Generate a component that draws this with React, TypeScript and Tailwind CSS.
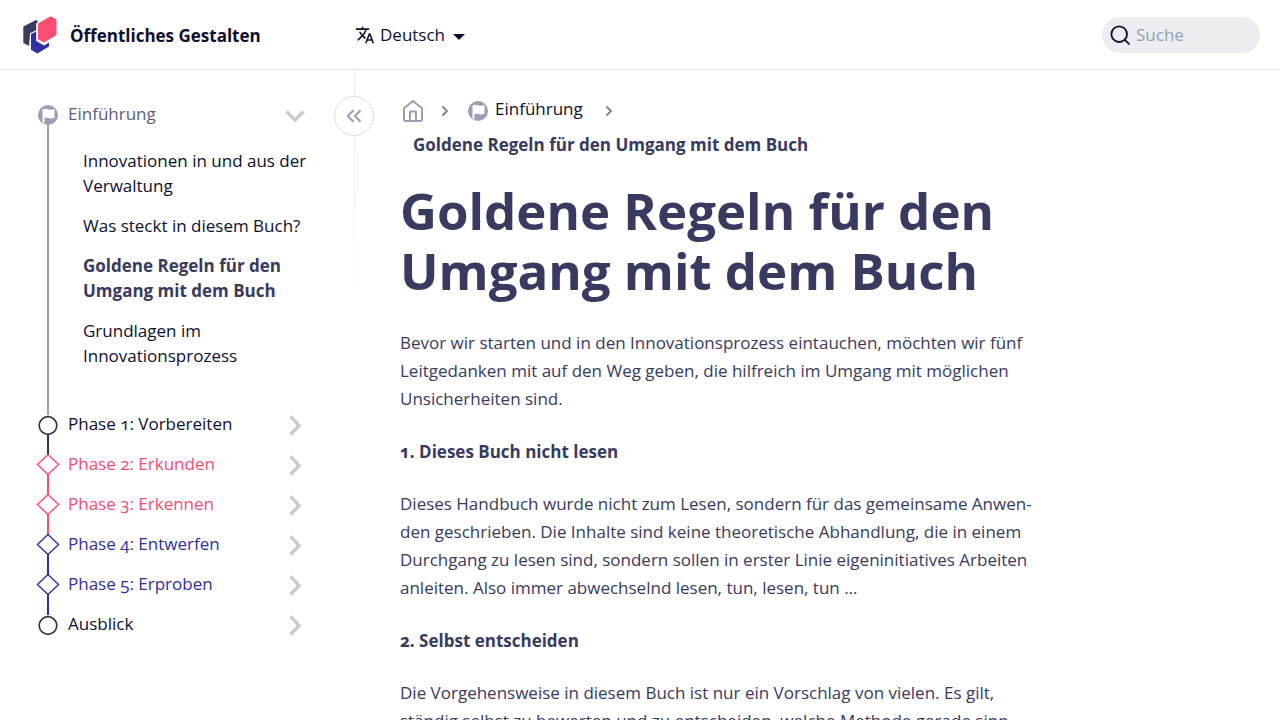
import { ReactNode } from 'react';
import { MdTranslate } from 'react-icons/md';

type Shape = 'flag' | 'circle' | 'diamond';

type Chapter = {
  title: string;
  shape: Shape;
  text: string;
  icon: string;
  before: string;
  after: string;
};

const phases: Chapter[] = [
  { title: 'Phase 1: Vorbereiten', shape: 'circle', text: 'text-[#0e0f2e]', icon: 'text-[#2f3159]', before: 'bg-[#9d9db5]', after: 'bg-[#2f3159]' },
  { title: 'Phase 2: Erkunden', shape: 'diamond', text: 'text-[#f94d72]', icon: 'text-[#f94d72]', before: 'bg-[#2f3159]', after: 'bg-[#f94d72]' },
  { title: 'Phase 3: Erkennen', shape: 'diamond', text: 'text-[#f94d72]', icon: 'text-[#f94d72]', before: 'bg-[#f94d72]', after: 'bg-[#f94d72]' },
  { title: 'Phase 4: Entwerfen', shape: 'diamond', text: 'text-[#2f2fa2]', icon: 'text-[#2f2fa2]', before: 'bg-[#f94d72]', after: 'bg-[#2f2fa2]' },
  { title: 'Phase 5: Erproben', shape: 'diamond', text: 'text-[#2f2fa2]', icon: 'text-[#2f2fa2]', before: 'bg-[#2f2fa2]', after: 'bg-[#2f2fa2]' },
  { title: 'Ausblick', shape: 'circle', text: 'text-[#0e0f2e]', icon: 'text-[#2f3159]', before: 'bg-[#2f2fa2]', after: 'bg-transparent' },
];

const pages = [
  'Innovationen in und aus der Verwaltung',
  'Was steckt in diesem Buch?',
  'Goldene Regeln für den Umgang mit dem Buch',
  'Grundlagen im Innovationsprozess',
];

function Logo() {
  return (
    <svg width="34" height="38" viewBox="23 16 34 38" aria-hidden="true" className="shrink-0">
      <path fill="#393a60" d="M23.3 26.4 36 20l1.600 1v1.500l-1.400 1.100v6.600L30 33.300l-.9 12.700-5.800-3z" />
      <path fill="#302fa3" d="m31 34 5.200-2.600v9.600l7.900 4.400 4.900-2.800v3.900L37.400 53.400 31 49.800z" />
      <path fill="#f94d72" d="m50.700 16.300 5.800 3.300v15.500L44 42.600l-6-3.400V23.600z" />
    </svg>
  );
}

function FlagIcon() {
  return (
    <svg width="20" height="20" viewBox="0 0 20 20" aria-hidden="true" className="shrink-0">
      <circle cx="10" cy="10" r="10" fill="#9d9db5" />
      <path
        fill="#fff"
        d="M4.500 4.400c2-.9 4-.7 6 0 2 .6 4 .5 6-.4v8.800c-2 .9-4 .9-6 .3-1.500-.5-2.500-.5-4-.2V18.500l-2-1.200z"
      />
    </svg>
  );
}

function ShapeIcon({ shape }: { shape: Shape }) {
  if (shape === 'flag') return <FlagIcon />;
  return (
    <svg width="24" height="20" viewBox="0 0 24 20" fill="none" stroke="currentColor" aria-hidden="true" className="shrink-0 overflow-visible">
      {shape === 'circle' ? (
        <circle cx="12" cy="10.500" r="8.800" strokeWidth="1.700" />
      ) : (
        <path d="M12-.5 22.600 9.500 12 19.500 1.400 9.500z" strokeWidth="1.400" />
      )}
    </svg>
  );
}

function Rail({ shape, icon, before, after }: { shape: Shape; icon: string; before: string; after: string }) {
  return (
    <div className={`flex w-6 shrink-0 flex-col items-center ${icon}`}>
      <div className={`h-[10px] w-[2px] ${before}`} />
      <ShapeIcon shape={shape} />
      <div className={`w-[2px] flex-1 ${after}`} />
    </div>
  );
}

function RowButton({ label, open, children }: { label: string; open?: boolean; children?: ReactNode }) {
  return (
    <button type="button" aria-label={label} aria-expanded={open} className="flex size-6 items-center justify-center text-[#cccccc]">
      <svg width="24" height="24" viewBox="0 0 24 24" fill="none" stroke="currentColor" strokeWidth="3.500" aria-hidden="true">
        {children}
      </svg>
    </button>
  );
}

function Separator() {
  return (
    <svg width="8" height="12" viewBox="0 0 8 12" fill="none" stroke="#808080" strokeWidth="1.800" aria-hidden="true" className="mt-1 shrink-0">
      <path d="m1.500 1.500 4.500 4.500-4.500 4.500" />
    </svg>
  );
}

function Header() {
  return (
    <header className="flex h-[70px] shrink-0 items-center border-b border-[#e9e9ec] pr-5">
      <a href="#start" className="flex w-[355px] shrink-0 items-center gap-[13px] pl-[23px] font-bold">
        <Logo />
        <span className="pt-[2px]">Öffentliches Gestalten</span>
      </a>
      <button type="button" className="flex items-center gap-[5px]">
        <MdTranslate size={20} aria-hidden="true" />
        Deutsch
        <svg width="12" height="6" viewBox="0 0 12 6" fill="currentColor" aria-hidden="true" className="ml-[3px] mt-1">
          <path d="M0 0h12L6 6z" />
        </svg>
      </button>
      <label className="ml-auto flex h-9 w-[158px] items-center gap-[6px] rounded-full bg-[#ebedf0] px-2">
        <svg width="20" height="20" viewBox="0 0 20 20" fill="none" stroke="currentColor" strokeWidth="1.800" strokeLinecap="round" aria-hidden="true" className="shrink-0">
          <circle cx="9.200" cy="9.200" r="7.800" />
          <path d="m14.900 14.900 4 4" />
        </svg>
        <input type="search" aria-label="Suche" placeholder="Suche" className="w-full min-w-0 bg-transparent outline-none placeholder:text-[#969faf]" />
      </label>
    </header>
  );
}

function Sidebar() {
  return (
    <nav aria-label="Kapitel" className="relative w-[355px] shrink-0 pl-9 pt-[25px]">
      <ul>
        <li className="flex gap-2">
          <Rail shape="flag" icon="text-[#9d9db5]" before="bg-transparent" after="bg-[#9d9db5]" />
          <div className="flex-1 pb-[37px]">
            <div className="flex h-10 items-center justify-between pr-12">
              <a href="#einfuehrung" className="pb-[2px] text-[#5c5d80]">Einführung</a>
              <RowButton label="Einführung einklappen" open>
                <path d="m3.500 8.500 8.500 8.500 8.500-8.500" />
              </RowButton>
            </div>
            <ul className="flex w-[245px] flex-col gap-[15px] pl-[15px] pt-[13px] leading-[25px]">
              {pages.map((page, i) => (
                <li key={page}>
                  <a href={`#seite-${i + 1}`} className={i === 2 ? 'block font-bold text-[#393a60]' : 'block'}>
                    {page}
                  </a>
                </li>
              ))}
            </ul>
          </div>
        </li>
        {phases.map((phase, i) => (
          <li key={phase.title} className="flex h-10 gap-2">
            <Rail {...phase} />
            <div className="flex flex-1 items-center justify-between pr-12">
              <a href={`#kapitel-${i + 1}`} className={`pb-[2px] ${phase.text}`}>{phase.title}</a>
              <RowButton label={`${phase.title} ausklappen`} open={false}>
                <path d="m7.500 3.500 8.500 9-8.500 9" />
              </RowButton>
            </div>
          </li>
        ))}
      </ul>
      <div className="absolute right-0 top-0 h-[260px] w-px bg-linear-to-b from-[#e6e6ec] to-transparent" />
      <button
        type="button"
        aria-label="Seitenleiste einklappen"
        className="absolute -right-[19px] top-[26px] flex size-10 items-center justify-center rounded-full border border-[#dcdce4] bg-white text-[#9d9db5]"
      >
        <svg width="16" height="14" viewBox="0 0 16 14" fill="none" stroke="currentColor" strokeWidth="2" aria-hidden="true">
          <path d="M7.500 1.200 1.800 7l5.700 5.800M14.500 1.200 8.800 7l5.700 5.800" />
        </svg>
      </button>
    </nav>
  );
}

function Breadcrumbs() {
  return (
    <nav aria-label="Brotkrumen">
      <ol className="flex flex-wrap items-center leading-9">
        <li className="flex items-center pl-[2px]">
          <a href="#start" aria-label="Startseite" className="mr-[17px]">
            <svg width="22" height="24" viewBox="0 0 22 24" fill="none" stroke="#9d9db5" strokeWidth="2" strokeLinejoin="round" aria-hidden="true" className="mt-1">
              <path d="M2 9.200 11 2l9 7.200V20a2 2 0 0 1-2 2H4a2 2 0 0 1-2-2zM8 22V12.500h6V22" />
            </svg>
          </a>
          <Separator />
        </li>
        <li className="flex items-center pl-[19px]">
          <a href="#einfuehrung" className="mr-[22px] flex items-center gap-[7px]">
            <span className="pt-1"><FlagIcon /></span>
            Einführung
          </a>
          <Separator />
        </li>
        <li aria-current="page" className="pl-[13px] pr-6 font-bold text-[#393a60]">
          Goldene Regeln für den Umgang mit dem Buch
        </li>
      </ol>
    </nav>
  );
}

export default function App() {
  return (
    <div className="flex min-h-screen flex-col bg-white font-['Open_Sans','Noto_Sans',sans-serif] text-[17px] leading-6 oldstyle-nums text-[#0e0f2e] [scrollbar-width:none]">
      <Header />
      <div className="flex flex-1">
        <Sidebar />
        <main className="min-w-0 flex-1 pl-[45px] pr-6 pt-[21px]">
          <article className="max-w-[635px] leading-7 text-[#393a60]">
            <div className="text-[#0e0f2e]">
              <Breadcrumbs />
            </div>
            <h1 className="mt-[17px] text-[51px] font-bold leading-[60px]">
              Goldene Regeln für den Umgang mit dem Buch
            </h1>
            <p className="mt-[29px]">
              Bevor wir starten und in den Innovationsprozess eintauchen, möchten wir fünf Leitgedanken mit auf den Weg
              geben, die hilfreich im Umgang mit möglichen Unsicherheiten sind.
            </p>
            <h2 className="mt-[25px] font-bold">1. Dieses Buch nicht lesen</h2>
            <p className="mt-6">
              Dieses Handbuch wurde nicht zum Lesen, sondern für das gemeinsame Anwen&shy;den geschrieben. Die Inhalte
              sind keine theoretische Abhandlung, die in einem Durchgang zu lesen sind, sondern sollen in erster Linie
              eigeninitiatives Arbeiten anleiten. Also immer abwechselnd lesen, tun, lesen, tun …
            </p>
            <h2 className="mt-[25px] font-bold">2. Selbst entscheiden</h2>
            <p className="mt-6">
              Die Vorgehensweise in diesem Buch ist nur ein Vorschlag von vielen. Es gilt, ständig selbst zu bewerten
              und zu entscheiden, welche Methode gerade sinn&shy;voll ist.
            </p>
          </article>
        </main>
      </div>
    </div>
  );
}
